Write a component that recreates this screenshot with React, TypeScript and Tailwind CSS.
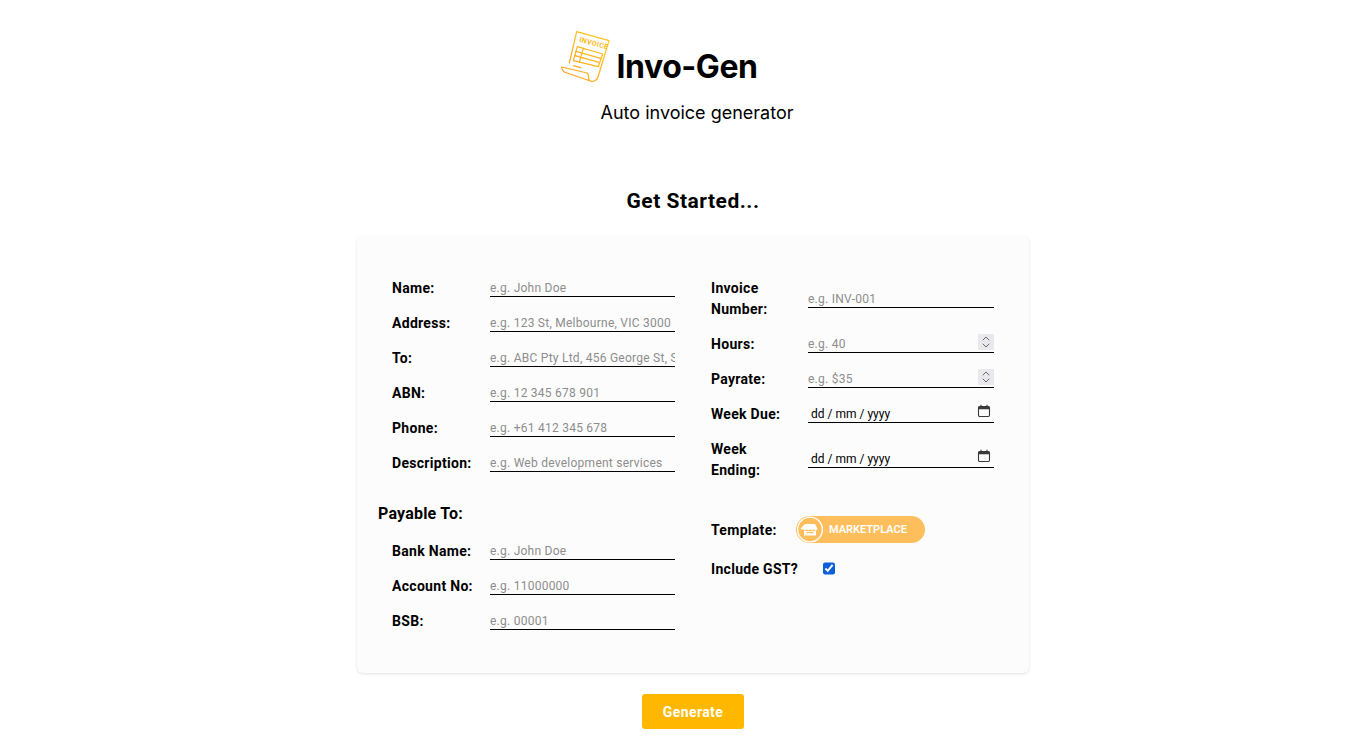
import React from 'react';

const font = "font-['Roboto','Noto_Sans',sans-serif]";

const Logo: React.FC = () => (
  <svg width="50" height="54" viewBox="0 0 50 54" fill="none" className="shrink-0">
    <defs>
      <linearGradient id="logoGrad" x1="4" y1="50" x2="46" y2="6" gradientUnits="userSpaceOnUse">
        <stop offset="0" stopColor="#ff9d24" />
        <stop offset="1" stopColor="#ffc81a" />
      </linearGradient>
    </defs>
    <g stroke="url(#logoGrad)" strokeWidth="1.2" strokeLinecap="round" strokeLinejoin="round">
      <path d="M8.3 33 L15.7 1.7 L48 10.7 L37 47 C36 51 31 52.5 28 50.5" />
      <path d="M0.7 37 L26 43 C28 44 27.5 47 28 50.5 M0.7 37 C0.5 40 3 42.5 6 43 L28 50.5" />
      <path d="M16.3 16.7 L41.7 24 L37.3 36.7 L12.3 30.7 Z" />
      <path d="M15 21.3 L39.7 28.3 M14 25.7 L38.3 32.3 M22.3 18.3 L18.3 32.3" />
      <path d="M12.3 35.7 L19.7 37.7" />
    </g>
    <text x="18" y="11.7" fontSize="7" fontWeight="700" fill="#ffb81c" transform="rotate(15 18 11.7)" fontFamily="Roboto, sans-serif" letterSpacing="0.4">INVOICE</text>
  </svg>
);

const StoreIcon: React.FC = () => (
  <svg width="28" height="27" viewBox="0 0 28 27" fill="none" className="shrink-0">
    <circle cx="14" cy="13.5" r="12.4" stroke="#fff" strokeWidth="1.4" />
    <path d="M9 8h10l2.4 4.4a1.7 1.7 0 0 1-3.4.5 1.9 1.9 0 0 1-3.6 0 1.9 1.9 0 0 1-3.6 0 1.9 1.9 0 0 1-3.6 0 1.7 1.7 0 0 1-2.6-.5z" fill="#fff" />
    <path d="M8 15h12v4.5H8z" fill="#fff" />
    <path d="M10.5 15.8h7v1.4h-7z" fill="#ffbe5c" />
  </svg>
);

const Spinner: React.FC = () => (
  <span className="absolute right-0 top-0 w-[16px] h-[16px] bg-[#e9e9ed] flex items-center justify-center pointer-events-none">
    <svg width="10" height="14" viewBox="0 0 10 14" fill="none" stroke="#6b6b6b" strokeWidth="1" strokeLinecap="round" strokeLinejoin="round">
      <path d="M2 5 L5 2 L8 5" />
      <path d="M2 9 L5 12 L8 9" />
    </svg>
  </span>
);

const CalendarIcon: React.FC = () => (
  <svg width="14" height="14" viewBox="0 0 14 14" fill="none" className="absolute right-[3px] top-0 pointer-events-none">
    <rect x="1.5" y="2.5" width="11" height="10" rx="1.2" stroke="#3a3a3a" strokeWidth="1.1" />
    <path d="M1.5 3.6a1.1 1.1 0 0 1 1.1-1.1h8.8a1.1 1.1 0 0 1 1.1 1.1V5.2H1.5z" fill="#3a3a3a" />
    <path d="M4 1v2M10 1v2" stroke="#3a3a3a" strokeWidth="1.1" strokeLinecap="round" />
  </svg>
);

const inputBase =
  "block w-full min-w-0 bg-transparent border-b border-black outline-none text-[12px] h-[19px] pt-[2px] leading-[18px] tracking-[0.25px] placeholder:text-[#8d8d8d] text-black";

const Label: React.FC<{ text: string }> = ({ text }) => (
  <label className="pr-[12px] pt-[2px] text-[14px] leading-[21px] font-bold tracking-[0.3px] text-black">{text}</label>
);

const Field: React.FC<{ label: string; placeholder?: string; className?: string; inputWidth?: string }> = ({
  label,
  placeholder,
  className = 'h-[35px]',
  inputWidth = 'grid-cols-[98px_185px]',
}) => (
  <div className={`grid ${inputWidth} items-center ${className}`}>
    <Label text={label} />
    <input type="text" placeholder={placeholder} className={inputBase} />
  </div>
);

const NumberField: React.FC<{ label: string; placeholder: string }> = ({ label, placeholder }) => (
  <div className="grid grid-cols-[97px_186px] items-center h-[35px]">
    <Label text={label} />
    <div className="relative">
      <input
        type="number"
        placeholder={placeholder}
        className={`${inputBase} [appearance:textfield] [&::-webkit-inner-spin-button]:appearance-none`}
      />
      <Spinner />
    </div>
  </div>
);

const DateField: React.FC<{ label: string; className?: string }> = ({ label, className = 'h-[35px]' }) => (
  <div className={`grid grid-cols-[97px_186px] items-center ${className}`}>
    <Label text={label} />
    <div className="relative">
      <input type="text" defaultValue="dd / mm / yyyy" className={`${inputBase} pl-[3px] tracking-normal`} />
      <CalendarIcon />
    </div>
  </div>
);

const App: React.FC = () => {
  return (
    <div className={`min-h-[742px] bg-white pl-[14px] flex flex-col items-center ${font}`}>
      <div className="flex items-start gap-[6px] mt-[30px] h-[60px] -ml-[68px]">
        <Logo />
        <h1 className="mt-[17px] text-[32px] leading-[40px] font-bold text-black font-['Inter',sans-serif] tracking-[-0.45px]">Invo-Gen</h1>
      </div>
      <p className="mt-[10px] ml-[8px] text-[18px] leading-[26px] text-black font-['Inter',sans-serif]">Auto invoice generator</p>

      <h2 className="mt-[60px] text-[21px] leading-[30px] font-bold tracking-[0.5px] text-black">Get Started...</h2>

      <div className="mt-[20px] w-[672px] h-[437px] bg-[#fcfcfc] rounded-[6px] shadow-[0_1px_3px_rgba(0,0,0,0.12)] px-[21px] pt-[34px] grid grid-cols-2 gap-x-[22px]">
        <div className="w-[308px]">
          <div className="pl-[14px]">
            <Field label="Name:" placeholder="e.g. John Doe" />
            <Field label="Address:" placeholder="e.g. 123 St, Melbourne, VIC 3000" />
            <Field label="To:" placeholder="e.g. ABC Pty Ltd, 456 George St, Sydney" />
            <Field label="ABN:" placeholder="e.g. 12 345 678 901" />
            <Field label="Phone:" placeholder="e.g. +61 412 345 678" />
            <Field label="Description:" placeholder="e.g. Web development services" />
          </div>
          <h3 className="mt-[20px] h-[28px] text-[16px] leading-[28px] font-bold tracking-[0.2px] text-black">Payable To:</h3>
          <div className="pl-[14px] mt-[5px]">
            <Field label="Bank Name:" placeholder="e.g. John Doe" />
            <Field label="Account No:" placeholder="e.g. 11000000" />
            <Field label="BSB:" placeholder="e.g. 00001" />
          </div>
        </div>

        <div className="pl-[7px]">
          <Field label="Invoice Number:" placeholder="e.g. INV-001" className="h-[56px]" inputWidth="grid-cols-[97px_186px]" />
          <NumberField label="Hours:" placeholder="e.g. 40" />
          <NumberField label="Payrate:" placeholder="e.g. $35" />
          <DateField label="Week Due:" />
          <DateField label="Week Ending:" className="h-[55px]" />
          <div className="mt-[30px] flex items-center h-[27px]">
            <span className="w-[85px] pt-[2px] text-[14px] font-bold tracking-[0.3px] text-black">Template:</span>
            <button className="w-[129px] h-[27px] rounded-full bg-[#ffbe5c] flex items-center gap-[5px] text-white text-[11px] font-semibold">
              <StoreIcon />
              <span className="pt-[2px]">MARKETPLACE</span>
            </button>
          </div>
          <div className="mt-[12px] flex items-center h-[28px]">
            <span className="w-[112px] text-[14px] font-bold tracking-[0.3px] text-black">Include GST?</span>
            <input type="checkbox" defaultChecked className="w-[12px] h-[13px] -mt-[2px] accent-[#0b5ed7]" />
          </div>
        </div>
      </div>

      <button className="mt-[21px] w-[102px] h-[35px] pt-[2px] rounded-[3px] bg-[#ffb700] text-white text-[14px] font-bold tracking-[0.4px]">Generate</button>
    </div>
  );
};

export default App;
